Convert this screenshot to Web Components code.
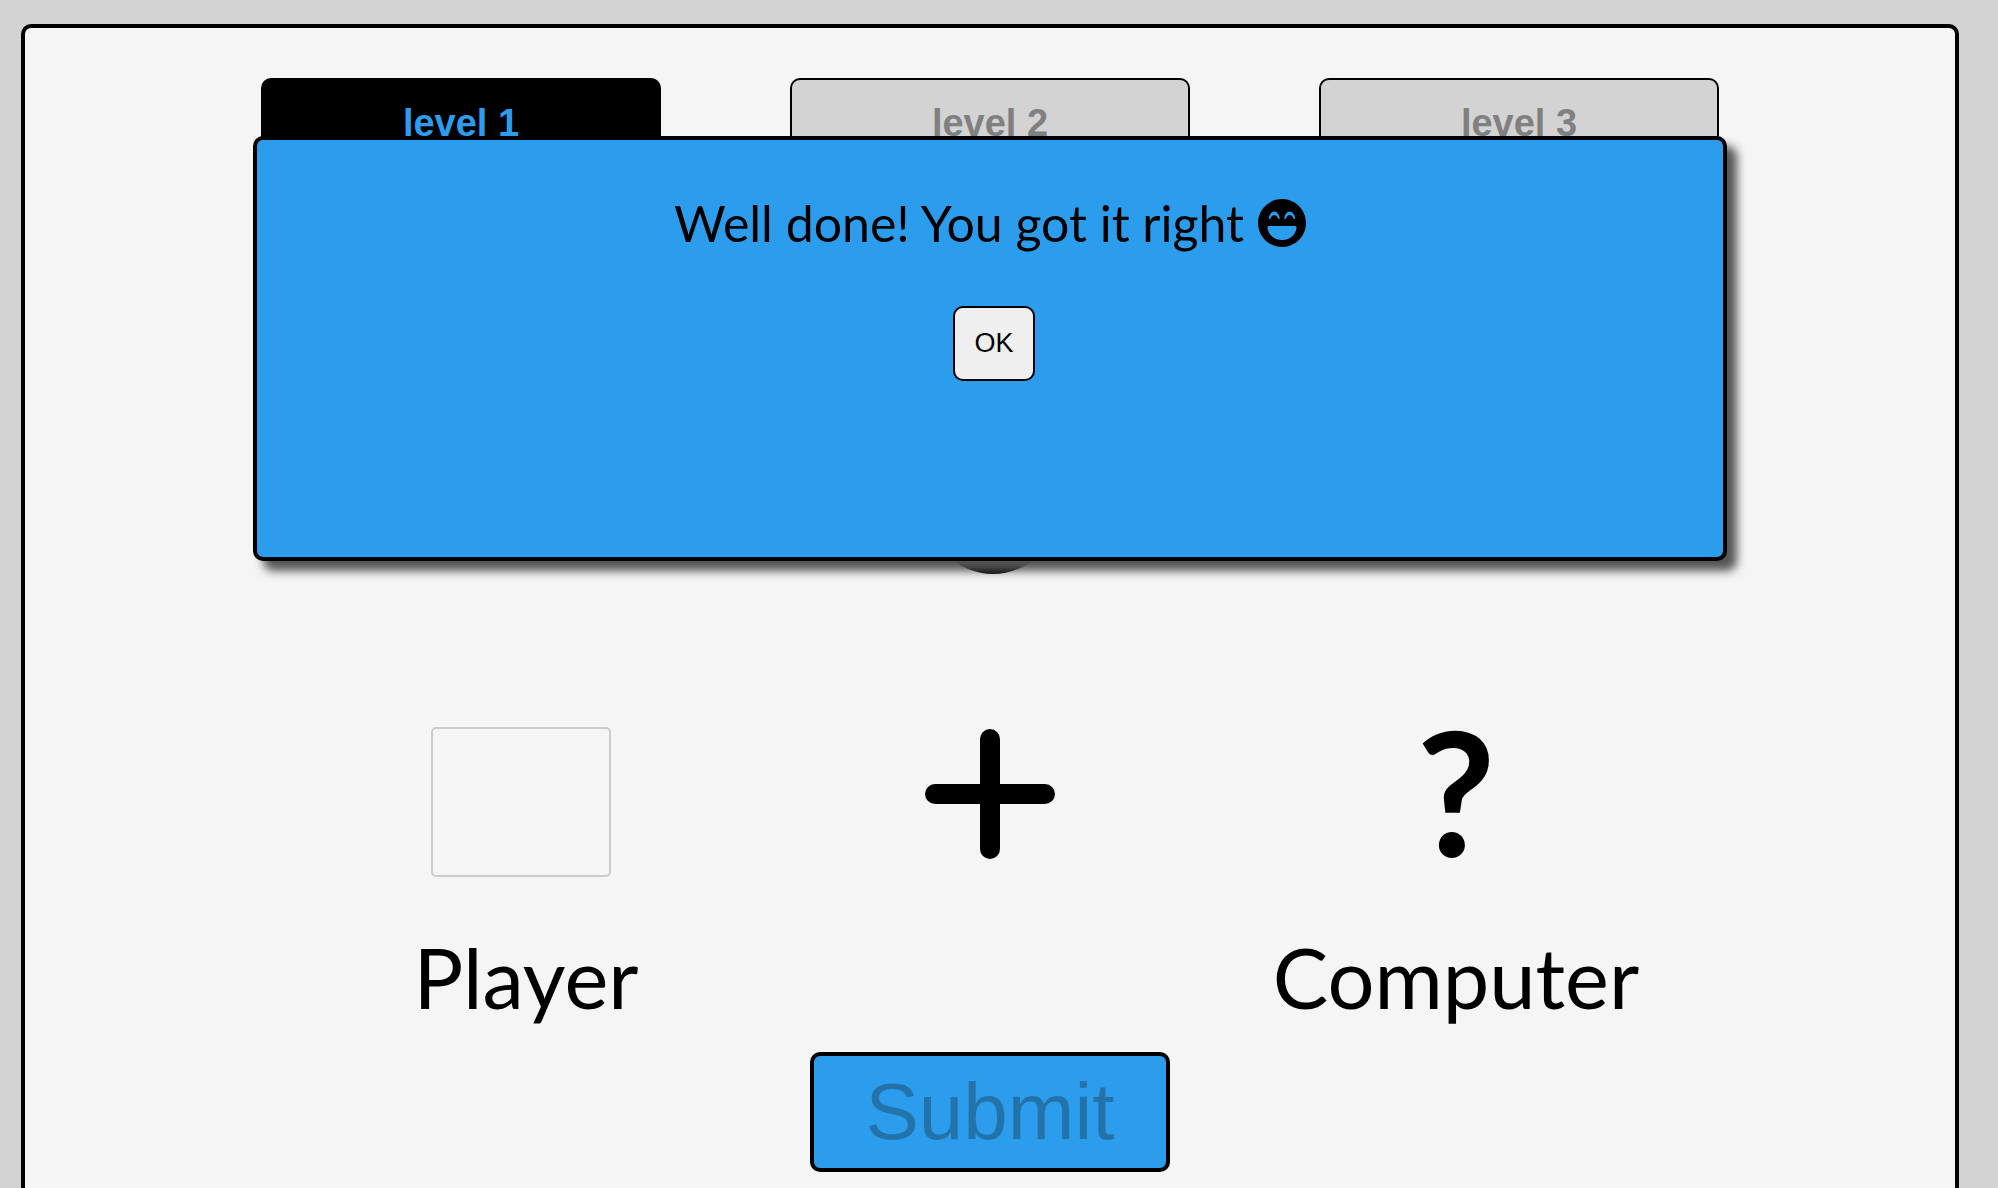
<!DOCTYPE html>
<html lang="en">
<head>
<meta charset="utf-8">
<title>Math game</title>
<style>
:root{--blue:#2b9dec;--panel:#f5f5f5;--grey:#d3d3d3;--hand:Lato,"Open Sans",sans-serif;--ui:"Liberation Sans",Arial,sans-serif}
*{box-sizing:border-box}
body{margin:0;height:100vh;overflow:hidden;background:var(--grey);color:#000;font-family:var(--hand)}
</style>
</head>
<body>
<math-game></math-game>
<script>
const define = (name, html) => {
  const tpl = document.createElement('template');
  tpl.innerHTML = '<style>*{box-sizing:border-box}</style>' + html;
  customElements.define(name, class extends HTMLElement {
    constructor() {
      super();
      this.attachShadow({mode: 'open'}).append(tpl.content.cloneNode(true));
    }
  });
};

define('level-tab', `
<style>
:host{display:block;flex:0 1 400px}
button{display:block;width:100%;height:90px;padding:0;border:2px solid #000;border-radius:10px;background:var(--grey);color:gray;font:bold 38px/42px var(--ui)}
:host([active]) button{background:#000;color:var(--blue)}
</style>
<button type="button"><slot></slot></button>`);

define('laugh-icon', `
<style>:host{display:block;width:48px;height:48px}svg{display:block;width:100%;height:100%}</style>
<svg viewBox="0 8 496 496" aria-hidden="true"><path d="M248 8C111 8 0 119 0 256s111 248 248 248 248-111 248-248S385 8 248 8zm24 199.4c3.3-42.1 32.2-71.4 56-71.4s52.7 29.3 56 71.4c.7 8.6-10.8 11.9-14.9 4.5l-9.5-17c-7.7-13.7-19.2-21.6-31.5-21.6s-23.8 7.9-31.5 21.6l-9.5 17c-4.2 7.4-15.8 4.1-15.1-4.5zm-160 0c3.3-42.1 32.2-71.4 56-71.4s52.7 29.3 56 71.4c.7 8.6-10.8 11.9-14.9 4.5l-9.5-17c-7.7-13.7-19.2-21.6-31.5-21.6s-23.8 7.9-31.5 21.6l-9.5 17c-4.3 7.4-15.8 4-15.1-4.5zM398.9 306C390 377 329.4 432 256 432h-16c-73.4 0-134-55-142.9-126-1.2-9.5 6.3-18 15.9-18h270c9.6 0 17.1 8.4 15.9 18z"/></svg>`);

define('result-dialog', `
<style>
:host{display:flex;flex-direction:column;align-items:center;gap:56px;padding:56px 20px 0;height:425px;background:var(--blue);border:4px solid #000;border-radius:10px;box-shadow:10px 10px 10px #555}
.message{display:flex;align-items:center;gap:14px;margin:0;font-size:50px;line-height:54px}
button{width:82px;height:75px;margin-left:8px;padding:0 0 2px;border:2px solid #000;border-radius:10px;background:#efefef;color:#000;font:27px/30px var(--ui)}
</style>
<p class="message"><slot></slot><laugh-icon></laugh-icon></p>
<button type="button">OK</button>`);

define('player-side', `
<style>
:host{display:flex;flex-direction:column;align-items:center;padding-left:8px}
label{display:flex;flex-direction:column;align-items:center;font-size:83px;line-height:96px}
input{width:180px;height:150px;margin:0 10px 52px 0;padding:0;border:2px solid #ccc;border-radius:5px;background:transparent;font:80px var(--ui);text-align:center}
</style>
<label><input type="text" inputmode="numeric"><slot></slot></label>`);

define('computer-side', `
<style>
:host{display:flex;flex-direction:column;align-items:center;padding-right:4px;font-size:83px;line-height:96px}
.answer{height:150px;margin-bottom:52px;font-size:172px;line-height:128px;font-weight:bold}
</style>
<span class="answer">?</span><span><slot></slot></span>`);

define('plus-sign', `
<style>:host{display:flex;justify-content:center;padding-top:2px}svg{width:130px;height:130px}</style>
<svg viewBox="0 0 130 130" role="img" aria-label="plus"><path d="M65 10v110M10 65h110" stroke="#000" stroke-width="20" stroke-linecap="round"/></svg>`);

define('math-game', `
<style>
:host{display:block;padding:24px 39px 0 21px}
main{position:relative;display:flex;flex-direction:column;min-height:100vh;padding-top:50px;background:var(--panel);border:4px solid #000;border-radius:10px}
nav{display:flex;justify-content:space-between;padding:0 236px}
.target{align-self:center;width:130px;height:130px;margin:276px 0 153px 6px;border-radius:50%;background:#000}
.board{display:grid;grid-template-columns:repeat(3,1fr);padding:0 263px}
.submit{align-self:center;width:360px;height:120px;margin-top:27px;padding:0;border:4px solid #000;border-radius:10px;background:var(--blue);color:rgba(16,16,16,.3);font:80px/92px var(--ui)}
result-dialog{position:absolute;top:108px;left:228px;right:228px}
</style>
<main>
<nav aria-label="Levels"><level-tab active>level 1</level-tab><level-tab>level 2</level-tab><level-tab>level 3</level-tab></nav>
<div class="target"></div>
<section class="board"><player-side>Player</player-side><plus-sign></plus-sign><computer-side>Computer</computer-side></section>
<button class="submit" type="submit" disabled>Submit</button>
<result-dialog role="dialog" aria-label="Result">Well done! You got it right</result-dialog>
</main>`);
</script>
</body>
</html>
